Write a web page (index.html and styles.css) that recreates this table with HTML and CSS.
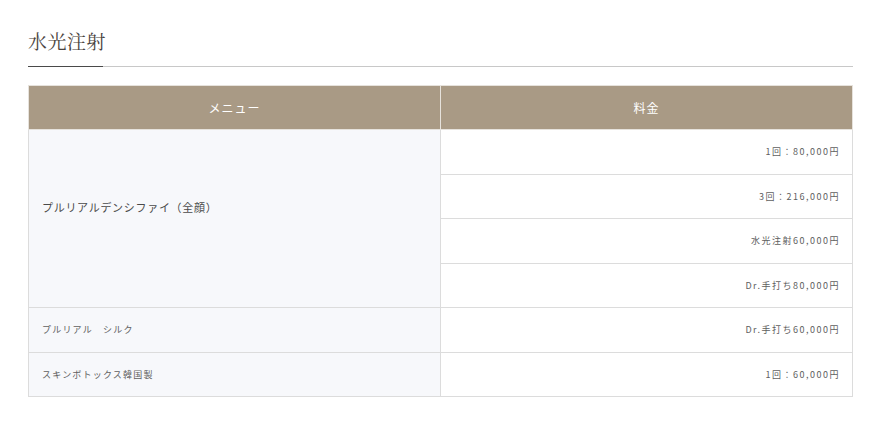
FILE: index.html
```html
<!DOCTYPE html>
<html lang="ja">
<head>
<meta charset="utf-8">
<link rel="stylesheet" href="styles.css">
</head>
<body>
<div class="wrap">
  <h2 class="title">水光注射</h2>
  <div class="rule"><span class="rule-accent"></span></div>
  <table class="price">
    <thead>
      <tr><th class="col-menu">メニュー</th><th class="col-price">料金</th></tr>
    </thead>
    <tbody>
      <tr><td class="menu menu-lg" rowspan="4">プルリアルデンシファイ（全顔）</td><td class="fee">1回：80,000円</td></tr>
      <tr><td class="fee">3回：216,000円</td></tr>
      <tr><td class="fee">水光注射60,000円</td></tr>
      <tr><td class="fee">Dr.手打ち80,000円</td></tr>
      <tr><td class="menu">プルリアル　シルク</td><td class="fee">Dr.手打ち60,000円</td></tr>
      <tr><td class="menu">スキンボトックス韓国製</td><td class="fee">1回：60,000円</td></tr>
    </tbody>
  </table>
</div>
</body>
</html>
```

FILE: styles.css
```css
html, body {
  margin: 0;
  padding: 0;
  background: #ffffff;
}
body {
  font-family: "Noto Sans CJK JP", "Noto Sans", sans-serif;
  color: #555555;
}
.wrap {
  padding: 29px 33px 0 28px;
}
.title {
  margin: 0;
  font-family: "Noto Serif CJK JP", "Liberation Serif", "Noto Sans CJK JP", serif;
  font-weight: normal;
  font-size: 19px;
  line-height: 24px;
  color: #4a4440;
  letter-spacing: 0.5px;
}
.rule {
  margin-top: 13px;
  height: 1px;
  background: #c8c8c8;
  display: flex;
}
.rule-accent {
  width: 75px;
  background: #4a4a4a;
}
.price {
  margin-top: 18px;
  width: 100%;
  border-collapse: collapse;
  table-layout: fixed;
}
.price th {
  background: #a99a85;
  color: #ffffff;
  font-weight: normal;
  font-size: 12px;
  letter-spacing: 1px;
  height: 43px;
  padding: 0;
  border: 1px solid #e6e2dc;
  text-align: center;
}
.col-menu {
  width: 411px;
}
.price td {
  border: 1px solid #dcdcdc;
  height: 43.5px;
  padding: 0;
  vertical-align: middle;
}
.menu {
  background: #f7f8fb;
  padding-left: 13px !important;
  font-size: 9px;
  letter-spacing: 1.2px;
  color: #606060;
}
.menu-lg {
  font-size: 11px;
  letter-spacing: 0.7px;
  color: #4a4a4a;
  padding-bottom: 24px !important;
}
.fee {
  background: #ffffff;
  text-align: right;
  padding-right: 12px !important;
  font-size: 9px;
  letter-spacing: 1.5px;
  color: #606060;
}
```
